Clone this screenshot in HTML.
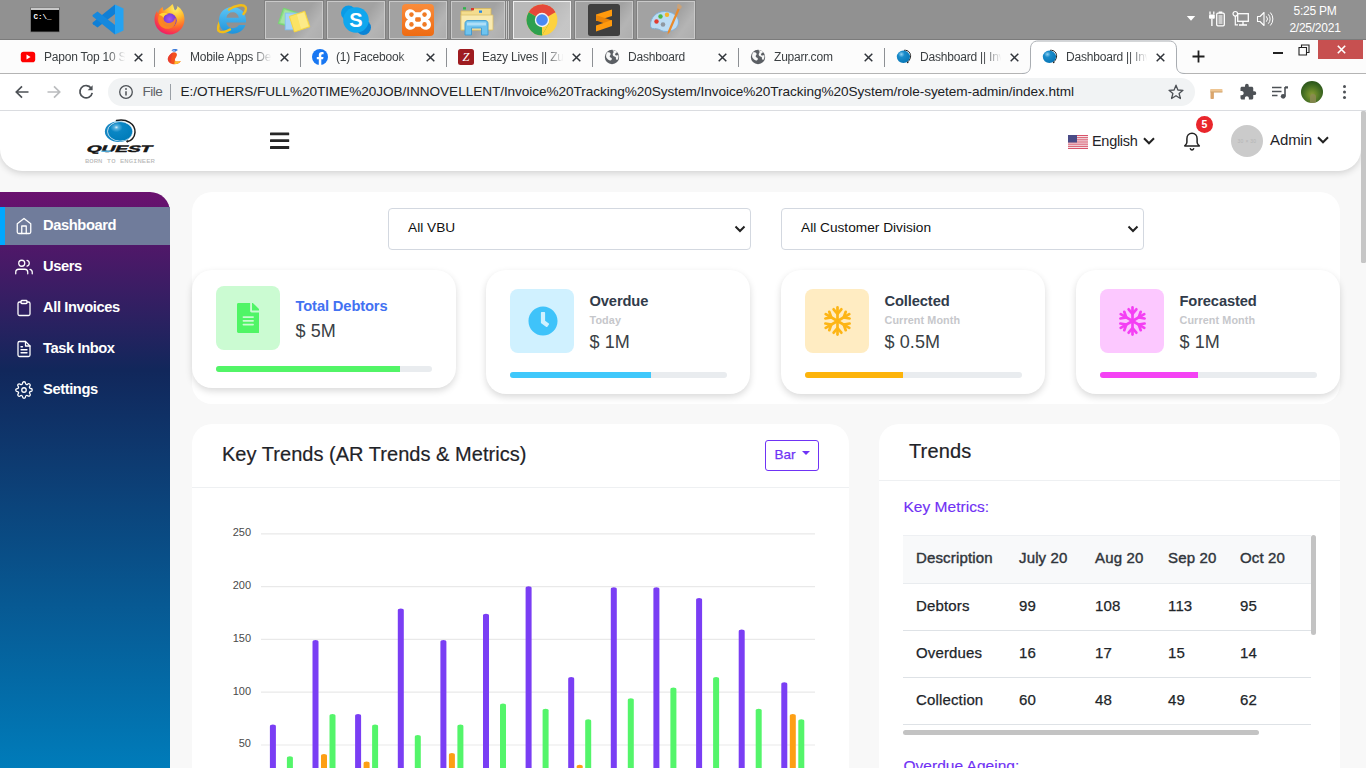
<!DOCTYPE html>
<html lang="en">
<head>
<meta charset="utf-8">
<title>Dashboard || Invoice Tracking System</title>
<style>
*{box-sizing:border-box;margin:0;padding:0}
html,body{width:1366px;height:768px;overflow:hidden;background:#f8f8f8;font-family:"Liberation Sans",Arial,sans-serif;color:#212529}
body{position:relative}
.abs{position:absolute}
/* ---------- OS taskbar ---------- */
#taskbar{position:absolute;left:0;top:0;width:1366px;height:40px;background:#919191}
.tb-btn{position:absolute;top:0;height:40px;width:60px;border:1px solid #808080;box-shadow:inset 0 0 0 1px #c9c9c9;background:linear-gradient(125deg,rgba(255,255,255,0) 58%,rgba(255,255,255,.2) 78%,rgba(255,255,255,.12) 100%),#a2a2a2}
.tb-btn.active{background:linear-gradient(125deg,rgba(255,255,255,0) 50%,rgba(255,255,255,.18) 80%),#b9b9b9;box-shadow:inset 0 0 0 1px #efefef;border-color:#8a8a8a}
.tb-ico{position:absolute;top:4px;width:32px;height:32px}
#clock{position:absolute;left:1276px;top:3px;width:78px;text-align:center;color:#fff;font-size:12px;line-height:17px;letter-spacing:-.25px}
/* ---------- Chrome ---------- */
#tabstrip{position:absolute;left:0;top:40px;width:1366px;height:34px;background:#fcfcfc;border-bottom:1px solid #b4b4b4}
.tab{position:absolute;top:0;height:33px;font-size:12px;letter-spacing:-.2px;color:#3c4043;white-space:nowrap}
.tab .ttl{position:absolute;left:44px;top:9px;width:83px;overflow:hidden;height:16px;line-height:16px;-webkit-mask-image:linear-gradient(90deg,#000 76%,transparent 98%);mask-image:linear-gradient(90deg,#000 76%,transparent 98%)}
.tab .fav{position:absolute;left:20px;top:9px;width:16px;height:16px}
.tab .x{position:absolute;left:133px;top:11.500px;width:11px;height:11px}
.tab .sep{position:absolute;left:154px;top:8px;width:1px;height:19px;background:#8d9094}
#toolbar{position:absolute;left:0;top:74px;width:1366px;height:37px;background:#fff;border-bottom:1px solid #dadce0}
#omni{position:absolute;left:108px;top:4px;width:1087px;height:28px;border-radius:14px;background:#f1f3f4}
#omni .url{position:absolute;left:72.500px;top:5px;font-size:13.600px;line-height:18px;color:#202124;white-space:nowrap;letter-spacing:-.055px}
#omni .file{position:absolute;left:34.500px;top:5px;font-size:13.600px;line-height:18px;color:#5f6368;letter-spacing:-.5px}
#omni .bar{position:absolute;left:62px;top:6px;width:1px;height:16px;background:#9aa0a6}
/* ---------- Page ---------- */
#page{position:absolute;left:0;top:111px;width:1361px;height:657px;background:#f8f8f8;overflow:hidden}
#vscroll{position:absolute;left:1361px;top:111px;width:5px;height:657px;background:#f8f8f8}
#vscroll i{position:absolute;left:0;top:0;width:5px;height:152px;background:#c6c6c6;border-radius:1.5px}
#header{position:absolute;left:0;top:0;width:1361px;height:60px;background:#fff;border-radius:0 0 22px 22px;box-shadow:0 2px 7px rgba(0,0,0,.16)}
#sidebar{position:absolute;left:0;top:81px;width:170px;height:576px;border-radius:0 20px 0 0;background:linear-gradient(180deg,#6b116f 0%,#11275b 31%,#007cba 100%)}
.nav{position:absolute;left:0;width:170px;height:38px;color:#fff;font-weight:700;font-size:14.7px;line-height:36px;padding-left:43px;letter-spacing:-.4px}
.nav svg{position:absolute;left:15px;top:10px;width:18px;height:18px;fill:none;stroke:#fff;stroke-width:1.7;stroke-linecap:round;stroke-linejoin:round}
.nav.active{background:#707c9b;border-left:5px solid #00a8ff;padding-left:38px}
.nav.active svg{left:10px}
.card{position:absolute;background:#fff;border-radius:20px}
.shadow{box-shadow:0 3px 10px rgba(0,0,0,.13)}

.sel{position:absolute;top:97px;height:42px;width:363px;border:1px solid #d3d8e0;border-radius:4px;background:#fff;font-size:13.700px;line-height:38px;padding-left:19px;color:#111}
.sel svg{position:absolute;right:3px;top:14px}
.stat{position:absolute;top:159px;width:264px;height:124px;background:#fff;border-radius:20px;box-shadow:0 3px 7px rgba(0,0,0,.15)}
.stat .ib{position:absolute;left:24px;top:19px;width:64px;height:64px;border-radius:8px}
.stat .ib svg{position:absolute}
.stat .t{position:absolute;left:103.500px;top:21px;font-size:14.7px;font-weight:700;line-height:20px;color:#313b4a;white-space:nowrap;letter-spacing:-.12px}
.stat .s{position:absolute;left:103.500px;top:43px;font-size:10.8px;font-weight:700;line-height:14px;color:#c6c7cb;white-space:nowrap;letter-spacing:.1px}
.stat .v{position:absolute;left:103.500px;top:60px;font-size:18px;line-height:24px;color:#3a3f45;white-space:nowrap;letter-spacing:.1px}
.stat .pg{position:absolute;left:24px;top:102px;width:217px;height:6px;border-radius:3px;background:#e9ecef;overflow:hidden}
.stat .pg i{display:block;height:6px}
.ctitle{position:absolute;font-size:20px;line-height:28px;color:#1f2328;white-space:nowrap}
.hline{position:absolute;left:0;height:1px;background:#eef0f2}

#tbl{position:absolute;left:24px;top:111px;width:408px;height:190px;overflow:hidden;font-size:15px;color:#212529;-webkit-text-stroke:.25px #212529}
#tbl .r{position:absolute;left:0;width:560px;height:47px;border-bottom:1px solid #dee2e6;line-height:44px;letter-spacing:.15px}
#tbl .r.h{height:49px;background:#f8f9fa;line-height:43px;border-bottom:1px solid #e9ecef;border-top:1px solid #eef0f3;-webkit-text-stroke:.4px #30353b;color:#30353b}
#tbl .r span{position:absolute;top:0;white-space:nowrap}
</style>
</head>
<body>
<!-- TASKBAR -->
<div id="taskbar">
  <i class="abs" style="left:0;top:39px;width:1366px;height:1px;background:#7b7b7b"></i>
  <div class="tb-btn" style="left:264px"></div><div class="tb-btn" style="left:326px"></div><div class="tb-btn" style="left:388px"></div>
  <div class="tb-btn" style="left:454px;width:56px"></div><div class="tb-btn" style="left:452px;width:56px"></div><div class="tb-btn" style="left:450px;width:56px"></div>
  <div class="tb-btn active" style="left:512px"></div><div class="tb-btn" style="left:574px"></div><div class="tb-btn" style="left:636px"></div>
  <!-- cmd -->
  <svg class="abs" style="left:30px;top:6px" width="30" height="27" viewBox="0 0 30 27"><rect x=".5" y="1.500" width="29" height="24.500" fill="#000" stroke="#7d7d7d" stroke-width=".8"/><rect x="1" y="1.800" width="28" height="2.200" fill="#c9c9c9"/><text x="3.500" y="13" font-family="'Liberation Mono',monospace" font-weight="700" font-size="7.500" fill="#fff">C:\_</text></svg>
  <!-- vscode -->
  <svg class="abs" style="left:91px;top:3px" width="34" height="33" viewBox="0 0 34 33"><path d="M24 1.500 L24 11 L6.500 24.500 L2 21.200 C1.300 20.600 1.300 19.800 2 19.200z" fill="#0f7fd6"/><path d="M24 31.500 L24 22 L6.500 8.500 L2 11.800 C1.300 12.400 1.300 13.200 2 13.800z" fill="#1588dd"/><path d="M24 1.500 L32.500 5.500 V27.500 L24 31.500z" fill="#25a3f2"/></svg>
  <!-- firefox -->
  <svg class="abs" style="left:153px;top:3px" width="33" height="33" viewBox="0 0 33 33"><defs><radialGradient id="ff1" cx=".7" cy=".15" r="1"><stop offset="0" stop-color="#fff36b"/><stop offset=".3" stop-color="#ffbd2e"/><stop offset=".6" stop-color="#ff6a2a"/><stop offset=".85" stop-color="#f5275d"/><stop offset="1" stop-color="#d9177c"/></radialGradient><radialGradient id="ff2" cx=".5" cy=".4" r=".6"><stop offset="0" stop-color="#a259f0"/><stop offset="1" stop-color="#6b2fc9"/></radialGradient></defs><path d="M19.500 1c1.500 2.500 1 4.500 2.500 6.500 2-1 2.500-3 2.300-4.500C29 6 31.500 11 31.500 16.500c0 8.300-6.700 15-15 15s-15-6.700-15-15c0-3.500 1-6.300 2.500-8.500.2 1.200.6 2 1.200 2.700C5.500 7.500 7.500 5 10 4c-.3 1.500 0 2.800.8 3.800C13 6 16.500 4.500 19.500 1z" fill="url(#ff1)"/><circle cx="16.500" cy="17.500" r="7.200" fill="url(#ff2)"/><path d="M6 12c2.500-2.500 6.500-2.800 9-1 -2.500.3-4 1.800-4.300 3.700 -.4 2.800 1.800 5.300 5 5.300 3.700 0 6-2.500 6.300-5.500 2 3 .5 9-4.500 10.800 -5.500 2-11.500-1.500-12.300-7.300C5 16 5.200 13.800 6 12z" fill="#ff8a1e" opacity=".92"/><path d="M6 12c2.500-2.500 6.500-2.800 9-1-2.500.3-4 1.800-4.300 3.700C9 13 7.500 12 6 12z" fill="#ffd43a"/></svg>
  <!-- IE -->
  <svg class="abs" style="left:216px;top:3px" width="32" height="32" viewBox="0 0 32 32"><defs><linearGradient id="ieg" x1="0" y1="0" x2="0" y2="1"><stop offset="0" stop-color="#5cc5f5"/><stop offset="1" stop-color="#1e93dc"/></linearGradient></defs><path d="M2.500 27.500 C.5 22 7 12 16 6" fill="none" stroke="#f2bd18" stroke-width="2.400" stroke-linecap="round"/><g transform="translate(16.500 17.500) scale(1.180) translate(-17.500 -18)"><path d="M17.500 6.500c6.500 0 11.500 4.800 11.500 11.500v1.800H12.300c.4 3 2.600 4.700 5.600 4.700 2.300 0 4-.9 5-2.600h5.600c-1.600 4.500-5.600 7.400-10.800 7.400C10.800 29.300 6 24.600 6 18 6 11.300 10.800 6.500 17.500 6.500zm0 4.600c-2.700 0-4.700 1.700-5.200 4.500h10.500c-.4-2.800-2.500-4.500-5.300-4.500z" fill="url(#ieg)"/></g><path d="M13 6.500 C19 2 27.500 1 29.500 4 C30.500 5.800 29.500 8.500 27.500 11" fill="none" stroke="#f2bd18" stroke-width="2.400" stroke-linecap="round"/><path d="M2.500 27.500 C4 30.500 10 29 14 26.500" fill="none" stroke="#f2bd18" stroke-width="2.400" stroke-linecap="round"/></svg>
  <!-- sticky notes -->
  <svg class="abs" style="left:260px;top:0" width="70" height="40" viewBox="0 0 70 40"><polygon points="23.500,8.200 37.700,12.800 32.800,27.300 18.300,23.500" fill="#8fdc8a" stroke="#6fdc6a" stroke-width=".8"/><polygon points="24.800,10 36,13.600 32,25.700 20.200,22.500" fill="#b6eab2" opacity=".6"/><rect x="25.200" y="13.100" width="16" height="16.700" fill="#a5d2f8" stroke="#7fc0f5" stroke-width=".8"/><polygon points="29.300,16.400 44.800,11.200 49.800,26.800 34.400,32" fill="#fbe365" stroke="#f6d43a" stroke-width=".9"/><polygon points="37,14.800 44,12.500 48.500,26.200 41,28.800" fill="#fdf0a6" opacity=".55"/></svg>
  <!-- skype -->
  <svg class="abs" style="left:340px;top:4px" width="32" height="32" viewBox="0 0 32 32"><circle cx="8.500" cy="9" r="7.500" fill="#0a9be6"/><circle cx="23.500" cy="23.500" r="7.500" fill="#0a84d6"/><circle cx="16" cy="16" r="12.800" fill="#10a7ee"/><text x="16" y="23.300" text-anchor="middle" font-family="'Liberation Sans',Arial,sans-serif" font-weight="700" font-size="20" fill="#fff">S</text></svg>
  <!-- xampp -->
  <svg class="abs" style="left:402px;top:4px" width="32" height="32" viewBox="0 0 32 32"><defs><linearGradient id="xa" x1="0" y1="0" x2="0" y2="1"><stop offset="0" stop-color="#f98c3c"/><stop offset="1" stop-color="#ee6b12"/></linearGradient></defs><rect x="0" y="0" width="32" height="32" rx="4" fill="url(#xa)"/><g transform="translate(16 15.500) scale(1.130 1.220) translate(-16 -15)"><path d="M9 6.500c2.500 0 3.800 1.200 4.800 2.500h4.400c1-1.300 2.300-2.500 4.800-2.500 2.700 0 4.500 1.900 4.500 4.300 0 2-1.100 3.400-2.700 4.200 1.600.8 2.700 2.200 2.700 4.200 0 2.400-1.800 4.300-4.500 4.300-2.500 0-3.800-1.200-4.800-2.500h-4.400c-1 1.300-2.300 2.500-4.800 2.500-2.700 0-4.500-1.900-4.500-4.300 0-2 1.100-3.400 2.700-4.200-1.600-.8-2.700-2.200-2.700-4.200C4.500 8.400 6.300 6.500 9 6.500z" fill="#fff"/><circle cx="10.200" cy="11" r="2" fill="#f07a24"/><circle cx="21.800" cy="11" r="2" fill="#f07a24"/><circle cx="10.200" cy="19" r="2" fill="#f07a24"/><circle cx="21.800" cy="19" r="2" fill="#f07a24"/><rect x="13.500" y="13.200" width="5" height="3.600" rx="1.200" fill="#f07a24"/></g></svg>
  <!-- explorer -->
  <svg class="abs" style="left:460px;top:6px" width="34" height="30" viewBox="0 0 34 30"><path d="M1 5 H12 L14 2.500 H31 V24 H1z" fill="#f3dc8e" stroke="#d8b95a" stroke-width=".8"/><rect x="3" y="1.200" width="3" height="2.300" fill="#2fb34a"/><rect x="11" y="2" width="3" height="2.300" fill="#d73a2f"/><rect x="19" y="4.500" width="3" height="2.300" fill="#2b8ae0"/><path d="M1 9 H33 V24 H1z" fill="#f9eab0" stroke="#dcc06a" stroke-width=".8"/><path d="M5 29 V17.500 C5 15.500 6.500 14.500 8 14.500 H25 C26.500 14.500 28 15.500 28 17.500 V29 H21.500 V22 H11.500 V29z" fill="#6fc3ee" stroke="#3e9ad0" stroke-width=".9"/><path d="M7 16.500 H26 V19.500 H7z" fill="#bfe6fa" opacity=".8"/></svg>
  <!-- chrome -->
  <svg class="abs" style="left:526px;top:4px" width="32" height="32" viewBox="0 0 32 32"><circle cx="16" cy="16" r="15.400" fill="#fdd23f"/><path d="M16 16 L2.660 8.300 A15.400 15.400 0 0 1 29.340 8.300z" fill="#e5483a"/><path d="M16 .6 A15.400 15.400 0 0 1 29.340 8.300 H16z" fill="#e5483a"/><path d="M16 16 L2.660 8.300 A15.400 15.400 0 0 0 16 31.400 L22.900 19.500z" fill="#2ea04f"/><path d="M16 31.400 L22.900 19.500 L16 16z" fill="#fdd23f"/><circle cx="16" cy="16" r="7.200" fill="#f4f4f4"/><circle cx="16" cy="16" r="5.800" fill="#4a8af4"/></svg>
  <!-- sublime -->
  <svg class="abs" style="left:588px;top:4px" width="32" height="32" viewBox="0 0 32 32"><rect width="32" height="32" rx="2.500" fill="#3f3f3f"/><path d="M8 10.500 L24 5.500 V12 L8 17z" fill="#ff9a0d"/><path d="M8 11 L24 16.500 V22 L8 16.500z" fill="#e8840a"/><path d="M24 16 L8 21.500 V27.500 L24 22z" fill="#ff9a0d"/></svg>
  <!-- paint -->
  <svg class="abs" style="left:649px;top:3px" width="34" height="34" viewBox="0 0 34 34"><path d="M15.500 8.500c8 0 14 4.500 14 10.500 0 5.500-5 9.500-12.500 9.500-4.500 0-5.500-2-8-2.500-3-.6-7.500 1-7.500-4C1.500 14.500 7.500 8.500 15.500 8.500z" fill="#bcdcf4" stroke="#7fb0d8" stroke-width=".9"/><circle cx="14" cy="21.500" r="2.300" fill="#8f98a2"/><circle cx="7.500" cy="18.500" r="2.200" fill="#e03c31"/><circle cx="11.500" cy="13.500" r="2.200" fill="#4db848"/><circle cx="18" cy="11.800" r="2.200" fill="#f5b52a"/><path d="M29.500 3.500 L31.500 4.500 L21 29 L18.500 31.500 L19 28z" fill="#e98a2b"/><path d="M28.500 1 C30 .5 32.500 2 33 4 L31 6.500 L28 5z" fill="#c9a27a"/></svg>
  <!-- tray -->
  <svg class="abs" style="left:1186px;top:15px" width="10" height="7" viewBox="0 0 10 7"><path d="M.8 1 H9.200 L5 5.800z" fill="#fff"/></svg>
  <svg class="abs" style="left:1208px;top:10px" width="18" height="18" viewBox="0 0 18 18"><rect x="8.700" y="3.200" width="7.600" height="12.600" rx="1.200" fill="none" stroke="#fff" stroke-width="1.300"/><rect x="10.700" y="1.500" width="3.600" height="1.600" fill="#fff"/><rect x="10.500" y="5" width="4" height="9" fill="#fff" opacity=".55"/><path d="M2 1.500 V4.500 M5.800 1.500 V4.500" stroke="#fff" stroke-width="1.300"/><rect x="1" y="4.500" width="5.800" height="4.300" rx="1" fill="#fff"/><path d="M3.900 8.800 V16" stroke="#fff" stroke-width="1.400"/></svg>
  <svg class="abs" style="left:1232px;top:10px" width="18" height="18" viewBox="0 0 18 18"><rect x="5.700" y="3.700" width="10.600" height="7.600" fill="none" stroke="#fff" stroke-width="1.300"/><path d="M11 11.500 V14.500 M7 15 H15" stroke="#fff" stroke-width="1.300"/><circle cx="3.300" cy="3.800" r="2.300" fill="none" stroke="#fff" stroke-width="1.200"/><path d="M3.300 6 V14.800 H6" fill="none" stroke="#fff" stroke-width="1.200"/></svg>
  <svg class="abs" style="left:1256px;top:10px" width="18" height="18" viewBox="0 0 18 18"><path d="M1.500 6.500 H4 L8 2.500 V15.500 L4 11.500 H1.500z" fill="none" stroke="#fff" stroke-width="1.100" stroke-linejoin="round"/><path d="M10.300 6.300 a4 4 0 0 1 0 5.400 M12.300 4.300 a7 7 0 0 1 0 9.400 M14.300 2.500 a9.500 9.500 0 0 1 0 13" fill="none" stroke="#fff" stroke-width="1"/></svg>

  <div id="clock">5:25 PM<br>2/25/2021</div>
</div>
<!-- CHROME TABS -->
<div id="tabstrip">
  <svg class="abs" style="left:1022px;top:0" width="164" height="34" viewBox="0 0 164 34"><path d="M0 33.500 C6 33.500 8.500 31 8.500 25 V9 C8.500 4 11 1 16 1 H147 C152 1 154.500 4 154.500 9 V25 C154.500 31 157 33.500 163 33.500 V35 H0z" fill="#fff" stroke="#a9adb2" stroke-width="1"/></svg>
  <div class="tab" style="left:0px"><svg class="fav" viewBox="0 0 16 16"><rect x="0.800" y="2.800" width="14.400" height="10.400" rx="2.800" fill="#ff0000"/><path d="M6.500 5.600 L10.600 8 L6.500 10.400z" fill="#fff"/></svg><span class="ttl">Papon Top 10 Songs</span><svg class="x" viewBox="0 0 11 11"><path d="M1.700 1.700 L9.300 9.300 M9.300 1.700 L1.700 9.300" stroke="#30343a" stroke-width="1.500" fill="none"/></svg><i class="sep"></i></div>
  <div class="tab" style="left:146px"><svg class="fav" viewBox="0 0 16 16"><g transform="translate(-2.300 -2) scale(1.220)"><path d="M7.500 4.500c2-.6 3.600.5 3.300 2.300-.3 1.700-1.800 2.600-1.600 4 .2 1.200 1.900 1.500 4.800.6-1.200 2.300-4.600 3.400-7.600 2.300C3.600 12.700 2.600 10 4 7.800c.8-1.300 2-2.700 3.500-3.300z" fill="#f4511e"/><path d="M9.200 10.800c.2 1.200 1.900 1.500 4.800.6-1 1.800-3.200 2.700-5.300 2.600z" fill="#fbc02d"/><path d="M4 7.800c.8-1.300 2-2.700 3.500-3.300-.6 2.800-2 5.500-1.100 9.200C3.600 12.700 2.600 10 4 7.800z" fill="#e53935" opacity=".75"/><path d="M6.300 2.600 L9.200 1 L11.700 2.400 L9 4z" fill="#3d7bd9"/><circle cx="8.300" cy="3.300" r="1" fill="#8fb5ef"/></g></svg><span class="ttl">Mobile Apps Development</span><svg class="x" viewBox="0 0 11 11"><path d="M1.700 1.700 L9.300 9.300 M9.300 1.700 L1.700 9.300" stroke="#30343a" stroke-width="1.500" fill="none"/></svg><i class="sep"></i></div>
  <div class="tab" style="left:292px"><svg class="fav" viewBox="0 0 16 16"><circle cx="8" cy="8" r="8" fill="#1877f2"/><path d="M11.100 10.300l.4-2.300H9.300V6.500c0-.6.300-1.200 1.300-1.200h1V3.300s-.9-.2-1.800-.2c-1.800 0-3 1.100-3 3.100V8H4.800v2.300h2V16c.4.100.8.100 1.200.100s.8 0 1.300-.1v-5.700z" fill="#fff"/></svg><span class="ttl">(1) Facebook</span><svg class="x" viewBox="0 0 11 11"><path d="M1.700 1.700 L9.300 9.300 M9.300 1.700 L1.700 9.300" stroke="#30343a" stroke-width="1.500" fill="none"/></svg><i class="sep"></i></div>
  <div class="tab" style="left:438px"><svg class="fav" viewBox="0 0 16 16"><rect width="16" height="16" rx="2.500" fill="#9e1c20"/><text x="8" y="12.300" text-anchor="middle" font-family="'Liberation Serif',serif" font-style="italic" font-size="12.500" fill="#fff">Z</text></svg><span class="ttl">Eazy Lives || Zuparr</span><svg class="x" viewBox="0 0 11 11"><path d="M1.700 1.700 L9.300 9.300 M9.300 1.700 L1.700 9.300" stroke="#30343a" stroke-width="1.500" fill="none"/></svg><i class="sep"></i></div>
  <div class="tab" style="left:584px"><svg class="fav" viewBox="0 0 16 16"><circle cx="8" cy="8" r="7.200" fill="#5b5f64"/><path d="M3.200 3.300c1.600-.2 3 .3 3.400 1.400.4 1.200-1 1.600-.9 2.700.1 1 1.500 1 2 1.900.5 1-.4 2.400-1.700 2.200C4.300 11.200 3 9.500 2.200 8.200 1.900 6.400 2.300 4.500 3.200 3.300z M8.500 1.400c1.700-.3 3.600.5 4.500 1.600-.3.900-1.300 1-1.800 1.800-.4.800 0 1.600 1 1.700.9.100 1.600-.4 2.200-.1.300 1.600-.3 3.500-1.200 4.600-1-.2-1.400-1.100-1.300-2 .100-.8-.600-1.200-1.400-1.400-1-.3-1.800-1-1.800-2.100 0-1.300 1-1.700.9-2.700-.1-.6-.6-1-1.100-1.400z" fill="#fff" opacity=".95"/></svg><span class="ttl">Dashboard</span><svg class="x" viewBox="0 0 11 11"><path d="M1.700 1.700 L9.300 9.300 M9.300 1.700 L1.700 9.300" stroke="#30343a" stroke-width="1.500" fill="none"/></svg><i class="sep"></i></div>
  <div class="tab" style="left:730px"><svg class="fav" viewBox="0 0 16 16"><circle cx="8" cy="8" r="7.200" fill="#5b5f64"/><path d="M3.200 3.300c1.600-.2 3 .3 3.400 1.400.4 1.200-1 1.600-.9 2.700.1 1 1.500 1 2 1.900.5 1-.4 2.400-1.700 2.200C4.300 11.200 3 9.500 2.200 8.200 1.900 6.400 2.300 4.500 3.200 3.300z M8.500 1.400c1.700-.3 3.600.5 4.500 1.600-.3.900-1.300 1-1.800 1.800-.4.800 0 1.600 1 1.700.9.100 1.600-.4 2.200-.1.300 1.600-.3 3.500-1.200 4.600-1-.2-1.400-1.100-1.300-2 .100-.8-.600-1.200-1.400-1.400-1-.3-1.800-1-1.800-2.100 0-1.300 1-1.700.9-2.700-.1-.6-.6-1-1.100-1.400z" fill="#fff" opacity=".95"/></svg><span class="ttl">Zuparr.com</span><svg class="x" viewBox="0 0 11 11"><path d="M1.700 1.700 L9.300 9.300 M9.300 1.700 L1.700 9.300" stroke="#30343a" stroke-width="1.500" fill="none"/></svg><i class="sep"></i></div>
  <div class="tab" style="left:876px"><svg class="fav" viewBox="0 0 16 16"><defs><radialGradient id="qf" cx=".35" cy=".3" r=".8"><stop offset="0" stop-color="#8fd0f2"/><stop offset=".3" stop-color="#1a8ccb"/><stop offset="1" stop-color="#0573b3"/></radialGradient></defs><path d="M8 1.300c4.500-.5 7.200 3 6.500 6.800-.5 2.600-2 4.300-3 5" fill="none" stroke="#222" stroke-width="1"/><ellipse cx="7.400" cy="7.800" rx="6.600" ry="6.200" fill="url(#qf)"/><circle cx="11.700" cy="13.400" r=".8" fill="#222"/></svg><span class="ttl">Dashboard || Invoice Tracking System</span><svg class="x" viewBox="0 0 11 11"><path d="M1.700 1.700 L9.300 9.300 M9.300 1.700 L1.700 9.300" stroke="#30343a" stroke-width="1.500" fill="none"/></svg></div>
  <div class="tab act" style="left:1022px"><svg class="fav" viewBox="0 0 16 16"><defs><radialGradient id="qf2" cx=".35" cy=".3" r=".8"><stop offset="0" stop-color="#8fd0f2"/><stop offset=".3" stop-color="#1a8ccb"/><stop offset="1" stop-color="#0573b3"/></radialGradient></defs><path d="M8 1.300c4.500-.5 7.200 3 6.500 6.800-.5 2.600-2 4.300-3 5" fill="none" stroke="#222" stroke-width="1"/><ellipse cx="7.400" cy="7.800" rx="6.600" ry="6.200" fill="url(#qf2)"/><circle cx="11.700" cy="13.400" r=".8" fill="#222"/></svg><span class="ttl">Dashboard || Invoice Tracking System</span><svg class="x" viewBox="0 0 11 11"><path d="M1.700 1.700 L9.300 9.300 M9.300 1.700 L1.700 9.300" stroke="#30343a" stroke-width="1.500" fill="none"/></svg></div>
  <svg class="abs" style="left:1191px;top:9px" width="15" height="15" viewBox="0 0 15 15"><path d="M7.500 1.500 V13.500 M1.500 7.500 H13.500" stroke="#1f1f1f" stroke-width="1.800" fill="none"/></svg>
  <div class="abs" style="left:1273px;top:12px;width:10px;height:1.500px;background:#222"></div>
  <svg class="abs" style="left:1298px;top:4px" width="12" height="12" viewBox="0 0 12 12"><path d="M1 3.500 H8.500 V11 H1z M3.500 3.500 V1 H11 V8.500 H8.500" fill="none" stroke="#222" stroke-width="1.100"/></svg>
  <div class="abs" style="left:1318px;top:0;width:45px;height:18.600px;background:#c75050"></div>
  <svg class="abs" style="left:1336px;top:4px" width="11" height="11" viewBox="0 0 11 11"><path d="M1.800 1.800 L9.200 9.200 M9.200 1.800 L1.800 9.200" stroke="#fff" stroke-width="1.600" fill="none"/></svg>
</div>
<!-- CHROME TOOLBAR -->
<div id="toolbar">
  <svg class="abs" style="left:14px;top:10px" width="16" height="16" viewBox="0 0 16 16"><path d="M14.500 8 H2.500 M8 2.300 L2.300 8 L8 13.700" fill="none" stroke="#4d5156" stroke-width="1.700"/></svg>
  <svg class="abs" style="left:46px;top:10px" width="16" height="16" viewBox="0 0 16 16"><path d="M1.500 8 H13.500 M8 2.300 L13.700 8 L8 13.700" fill="none" stroke="#babcbe" stroke-width="1.700"/></svg>
  <svg class="abs" style="left:77px;top:9px" width="18" height="18" viewBox="0 0 18 18"><path d="M14.200 5.200 A6.200 6.200 0 1 0 15.200 9.800" fill="none" stroke="#4d5156" stroke-width="1.700"/><path d="M15.600 2.300 V7.300 H10.600z" fill="#4d5156"/></svg>
  <div id="omni">
    <svg class="abs" style="left:10px;top:6px" width="16" height="16" viewBox="0 0 16 16"><circle cx="8" cy="8" r="6.300" fill="none" stroke="#4d5156" stroke-width="1.300"/><path d="M8 7.200 V11.400" stroke="#4d5156" stroke-width="1.500"/><circle cx="8" cy="5" r=".9" fill="#4d5156"/></svg>
    <span class="file">File</span><i class="bar"></i><span class="url">E:/OTHERS/FULL%20TIME%20JOB/INNOVELLENT/Invoice%20Tracking%20System/Invoice%20Tracking%20System/role-syetem-admin/index.html</span>
    <svg class="abs" style="left:1059px;top:5px" width="18" height="18" viewBox="0 0 18 18"><path d="M9 2.200 L10.900 7 L16 7.300 L12.100 10.500 L13.400 15.500 L9 12.700 L4.600 15.500 L5.900 10.500 L2 7.300 L7.100 7z" fill="none" stroke="#4d5156" stroke-width="1.300" stroke-linejoin="round"/></svg>
  </div>
  <svg class="abs" style="left:1207px;top:10px" width="20" height="18" viewBox="0 0 20 18"><rect x="3.500" y="5" width="3.400" height="10" rx=".8" fill="#dba56c"/><rect x="3.500" y="5" width="12" height="3.300" rx=".8" fill="#eec592"/><rect x="3.500" y="7.600" width="12" height=".8" fill="#c99860"/></svg>
  <svg class="abs" style="left:1239px;top:9px" width="18" height="18" viewBox="0 0 24 24"><path d="M20.500 11H19V7c0-1.100-.9-2-2-2h-4V3.500a2.500 2.500 0 0 0-5 0V5H4c-1.100 0-2 .9-2 2v3.800h1.500c1.500 0 2.700 1.200 2.700 2.700S5 16.200 3.500 16.200H2V20c0 1.100.9 2 2 2h3.800v-1.500c0-1.500 1.200-2.700 2.700-2.700s2.700 1.200 2.700 2.700V22H17c1.100 0 2-.9 2-2v-4h1.500a2.500 2.500 0 0 0 0-5z" fill="#4d5156"/></svg>
  <svg class="abs" style="left:1270px;top:9px" width="19" height="18" viewBox="0 0 19 18"><path d="M2 4.500 H11.500 M2 8.500 H11.500 M2 12.500 H7.500" stroke="#4d5156" stroke-width="1.700" fill="none"/><path d="M15 4 V13.200" stroke="#4d5156" stroke-width="1.600"/><path d="M15 3.300 H18 V5.500 H15z" fill="#4d5156"/><circle cx="13.200" cy="13.300" r="2.400" fill="#4d5156"/></svg>
  <div class="abs" style="left:1301px;top:7px;width:22px;height:22px;border-radius:50%;background:radial-gradient(circle at 50% 62%,#8a9a3a 0,#6b8a2a 22%,#4b7324 45%,#2f5a1c 70%,#274a18 100%);overflow:hidden"><i class="abs" style="left:9px;top:13px;width:6px;height:12px;background:#8d8a55;border-radius:3px 3px 0 0;opacity:.8"></i></div>
  <div class="abs" style="left:1343px;top:11px;width:3.400px;height:3.400px;border-radius:50%;background:#4d5156;box-shadow:0 5.500px 0 #4d5156,0 11px 0 #4d5156"></div>
</div>
<!-- PAGE -->
<div id="page">
  <div id="header">
    <svg class="abs" style="left:80px;top:6px" width="82" height="52" viewBox="0 0 82 52">
      <defs><radialGradient id="gl" cx="0.33" cy="0.28" r="0.75"><stop offset="0" stop-color="#dff1fb"/><stop offset="0.12" stop-color="#58b1de"/><stop offset="0.35" stop-color="#0a86c4"/><stop offset="1" stop-color="#007cba"/></radialGradient></defs>
      <path d="M36.5 3.6 C46 1.5 55.5 6.5 55 15.5 C54.7 20.5 51 24 47.5 24.6" fill="none" stroke="#1c1c1c" stroke-width="1.5" stroke-linecap="round"/>
      <ellipse cx="38.7" cy="14.6" rx="13.8" ry="10.3" fill="#1586c2"/>
      <ellipse cx="39.9" cy="14.3" rx="12.4" ry="9.6" fill="none" stroke="#fff" stroke-width="0.8" opacity=".9"/>
      <ellipse cx="40.4" cy="14.4" rx="11.8" ry="9.2" fill="url(#gl)"/>
      <circle cx="47.3" cy="24.3" r="1.1" fill="#1c1c1c"/>
            <text x="0" y="0" transform="translate(5.8 34.6) skewX(-24) scale(1.62 1)" font-family="'Liberation Sans',Arial,sans-serif" font-weight="700" font-size="9.4" fill="#161616" stroke="#161616" stroke-width=".45" textLength="40.2" lengthAdjust="spacingAndGlyphs">QUEST</text>
      <rect x="21.3" y="33.6" width="9.6" height="1.3" fill="#53b4e6"/>
      <text x="5" y="45.8" font-family="'Liberation Mono','Liberation Sans',monospace" font-size="6.2" fill="#b4b4b4" textLength="70" lengthAdjust="spacingAndGlyphs">BORN TO ENGINEER</text>
    </svg>
    <svg class="abs" style="left:268px;top:18px" width="24" height="24" viewBox="0 0 24 24"><g fill="#262626"><rect x="2" y="3.400" width="19.200" height="2.900" rx=".5"/><rect x="2" y="10.200" width="19.200" height="2.900" rx=".5"/><rect x="2" y="17" width="19.200" height="2.900" rx=".5"/></g></svg>
    <!-- language -->
    <svg class="abs" style="left:1068px;top:24px" width="20" height="14" viewBox="0 0 20 14">
      <rect width="20" height="14" fill="#f6f1f2"/>
      <g fill="#d9536a"><rect y="0" width="20" height="1.08"/><rect y="2.15" width="20" height="1.08"/><rect y="4.3" width="20" height="1.08"/><rect y="6.46" width="20" height="1.08"/><rect y="8.6" width="20" height="1.08"/><rect y="10.77" width="20" height="1.08"/><rect y="12.92" width="20" height="1.08"/></g>
      <rect width="9" height="7.5" fill="#4a4b86"/>
    </svg>
    <div class="abs" style="left:1092px;top:20px;font-size:14.5px;line-height:20px;color:#1f2328;letter-spacing:-.3px">English</div>
    <svg class="abs" style="left:1142px;top:24px" width="14" height="12" viewBox="0 0 14 12"><path d="M2 3.2 L7 8.3 L12 3.2" fill="none" stroke="#222" stroke-width="2"/></svg>
    <!-- bell -->
    <svg class="abs" style="left:1182px;top:20px" width="20" height="22" viewBox="0 0 20 22"><path d="M10 2.3c-3 0-5.1 2.3-5.1 5.4v3.6c0 1.5-.9 2.6-2.2 3.6h14.6c-1.3-1-2.2-2.100-2.200-3.600V7.700C15.100 4.600 13 2.300 10 2.300z" fill="none" stroke="#222" stroke-width="1.5" stroke-linejoin="round"/><path d="M8.400 17.700c.3.800.9 1.200 1.600 1.200s1.300-.4 1.600-1.200" fill="none" stroke="#222" stroke-width="1.5" stroke-linecap="round"/></svg>
    <div class="abs" style="left:1196px;top:5px;width:17px;height:17px;border-radius:50%;background:#e9262c;color:#fff;font-size:10.5px;font-weight:700;line-height:17px;text-align:center">5</div>
    <!-- avatar -->
    <div class="abs" style="left:1231px;top:14px;width:32px;height:32px;border-radius:50%;background:#cbcbcb;color:#b5b5b5;font-size:5px;line-height:33px;text-align:center;letter-spacing:.3px">30 × 30</div>
    <div class="abs" style="left:1270px;top:19px;font-size:15px;line-height:20px;color:#1f2328;letter-spacing:-.1px">Admin</div>
    <svg class="abs" style="left:1316px;top:23px" width="14" height="12" viewBox="0 0 14 12"><path d="M2 3.2 L7 8.3 L12 3.2" fill="none" stroke="#222" stroke-width="2"/></svg>
  </div>
  <div id="sidebar">
    <div class="nav active" style="top:15px"><svg viewBox="0 0 24 24"><path d="M3 9l9-7 9 7v11a2 2 0 0 1-2 2H5a2 2 0 0 1-2-2z"/><polyline points="9 22 9 12 15 12 15 22"/></svg>Dashboard</div>
    <div class="nav" style="top:56px"><svg viewBox="0 0 24 24"><path d="M17 21v-2a4 4 0 0 0-4-4H5a4 4 0 0 0-4 4v2"/><circle cx="9" cy="7" r="4"/><path d="M23 21v-2a4 4 0 0 0-3-3.870"/><path d="M16 3.130a4 4 0 0 1 0 7.750"/></svg>Users</div>
    <div class="nav" style="top:97px"><svg viewBox="0 0 24 24"><path d="M16 4h2a2 2 0 0 1 2 2v14a2 2 0 0 1-2 2H6a2 2 0 0 1-2-2V6a2 2 0 0 1 2-2h2"/><rect x="8" y="2" width="8" height="4" rx="1" ry="1"/></svg>All Invoices</div>
    <div class="nav" style="top:138px"><svg viewBox="0 0 24 24"><path d="M14 2H6a2 2 0 0 0-2 2v16a2 2 0 0 0 2 2h12a2 2 0 0 0 2-2V8z"/><polyline points="14 2 14 8 20 8"/><line x1="16" y1="13" x2="8" y2="13"/><line x1="16" y1="17" x2="8" y2="17"/><polyline points="10 9 9 9 8 9"/></svg>Task Inbox</div>
    <div class="nav" style="top:179px"><svg viewBox="0 0 24 24"><circle cx="12" cy="12" r="3"/><path d="M19.400 15a1.650 1.650 0 0 0 .330 1.820l.060.060a2 2 0 0 1 0 2.830 2 2 0 0 1-2.830 0l-.060-.060a1.650 1.650 0 0 0-1.820-.330 1.650 1.650 0 0 0-1 1.510V21a2 2 0 0 1-2 2 2 2 0 0 1-2-2v-.090A1.650 1.650 0 0 0 9 19.400a1.650 1.650 0 0 0-1.820.330l-.060.060a2 2 0 0 1-2.830 0 2 2 0 0 1 0-2.830l.060-.060a1.650 1.650 0 0 0 .330-1.820 1.650 1.650 0 0 0-1.510-1H3a2 2 0 0 1-2-2 2 2 0 0 1 2-2h.090A1.650 1.650 0 0 0 4.600 9a1.650 1.650 0 0 0-.330-1.820l-.060-.060a2 2 0 0 1 0-2.830 2 2 0 0 1 2.830 0l.060.060a1.650 1.650 0 0 0 1.820.330H9a1.650 1.650 0 0 0 1-1.510V3a2 2 0 0 1 2-2 2 2 0 0 1 2 2v.090a1.650 1.650 0 0 0 1 1.510 1.650 1.650 0 0 0 1.820-.330l.060-.060a2 2 0 0 1 2.830 0 2 2 0 0 1 0 2.830l-.060.060a1.650 1.650 0 0 0-.330 1.820V9a1.650 1.650 0 0 0 1.510 1H21a2 2 0 0 1 2 2 2 2 0 0 1-2 2h-.090a1.650 1.650 0 0 0-1.510 1z"/></svg>Settings</div>
  </div>
  <div class="card" id="topbox" style="left:192px;top:81px;width:1148px;height:212px"></div>
  <div class="sel" style="left:388px">All VBU<svg width="14" height="12" viewBox="0 0 14 12"><path d="M2.500 3.500 L7 8 L11.500 3.500" fill="none" stroke="#222" stroke-width="2"/></svg></div>
  <div class="sel" style="left:781px">All Customer Division<svg width="14" height="12" viewBox="0 0 14 12"><path d="M2.500 3.500 L7 8 L11.500 3.500" fill="none" stroke="#222" stroke-width="2"/></svg></div>
  <div class="stat" style="left:192px;height:118px">
    <div class="ib" style="background:#cbfbd2;top:16px"><svg width="22.500" height="30" viewBox="0 0 384 512" style="left:20.500px;top:17px"><path fill="#50f566" d="M224 136V0H24C10.700 0 0 10.700 0 24v464c0 13.300 10.700 24 24 24h336c13.300 0 24-10.700 24-24V160H248c-13.200 0-24-10.800-24-24zm64 236c0 6.600-5.400 12-12 12H108c-6.600 0-12-5.400-12-12v-8c0-6.600 5.400-12 12-12h168c6.600 0 12 5.400 12 12v8zm0-64c0 6.600-5.400 12-12 12H108c-6.600 0-12-5.400-12-12v-8c0-6.600 5.400-12 12-12h168c6.600 0 12 5.400 12 12v8zm0-72v8c0 6.600-5.400 12-12 12H108c-6.600 0-12-5.400-12-12v-8c0-6.600 5.400-12 12-12h168c6.600 0 12 5.400 12 12zm96-114.100v6.100H256V0h6.100c6.400 0 12.500 2.500 17 7l97.900 98c4.500 4.500 7 10.600 7 16.900z"/></svg></div>
    <div class="t" style="color:#4271f2;top:26px">Total Debtors</div>
    <div class="v" style="top:49px">$ 5M</div>
    <div class="pg" style="top:96px;width:216px"><i style="width:85%;background:#52f567"></i></div>
  </div>
  <div class="stat" style="left:486px">
    <div class="ib" style="background:#d0f1ff"><svg width="30" height="30" viewBox="0 0 512 512" style="left:17.500px;top:16.800px"><path fill="#3fc3fa" d="M256 8C119 8 8 119 8 256s111 248 248 248 248-111 248-248S393 8 256 8zm57.100 350.100L224.900 294c-3.100-2.300-4.900-5.900-4.900-9.700V116c0-6.600 5.400-12 12-12h48c6.600 0 12 5.400 12 12v137.700l63.500 46.200c5.400 3.900 6.500 11.400 2.600 16.800l-28.200 38.800c-3.900 5.300-11.400 6.500-16.800 2.600z"/></svg></div>
    <div class="t">Overdue</div><div class="s">Today</div><div class="v">$ 1M</div>
    <div class="pg"><i style="width:65%;background:#3fc8fb"></i></div>
  </div>
  <div class="stat" style="left:781px">
    <div class="ib" style="background:#ffecc2"><svg width="27" height="30" viewBox="0 0 448 512" style="left:18.500px;top:17px"><g transform="translate(224 256)" fill="none" stroke="#fdb515" stroke-width="46" stroke-linecap="round" stroke-linejoin="round"><g transform="rotate(0)"><line x1="0" y1="0" x2="0" y2="-232"/><polyline points="-66,-200 0,-122 66,-200"/></g><g transform="rotate(60)"><line x1="0" y1="0" x2="0" y2="-232"/><polyline points="-66,-200 0,-122 66,-200"/></g><g transform="rotate(120)"><line x1="0" y1="0" x2="0" y2="-232"/><polyline points="-66,-200 0,-122 66,-200"/></g><g transform="rotate(180)"><line x1="0" y1="0" x2="0" y2="-232"/><polyline points="-66,-200 0,-122 66,-200"/></g><g transform="rotate(240)"><line x1="0" y1="0" x2="0" y2="-232"/><polyline points="-66,-200 0,-122 66,-200"/></g><g transform="rotate(300)"><line x1="0" y1="0" x2="0" y2="-232"/><polyline points="-66,-200 0,-122 66,-200"/></g></g></svg></div>
    <div class="t">Collected</div><div class="s">Current Month</div><div class="v">$ 0.5M</div>
    <div class="pg"><i style="width:45%;background:#fdb40b"></i></div>
  </div>
  <div class="stat" style="left:1076px">
    <div class="ib" style="background:#fcc8ff"><svg width="27" height="30" viewBox="0 0 448 512" style="left:18.500px;top:17px"><g transform="translate(224 256)" fill="none" stroke="#f43ff4" stroke-width="46" stroke-linecap="round" stroke-linejoin="round"><g transform="rotate(0)"><line x1="0" y1="0" x2="0" y2="-232"/><polyline points="-66,-200 0,-122 66,-200"/></g><g transform="rotate(60)"><line x1="0" y1="0" x2="0" y2="-232"/><polyline points="-66,-200 0,-122 66,-200"/></g><g transform="rotate(120)"><line x1="0" y1="0" x2="0" y2="-232"/><polyline points="-66,-200 0,-122 66,-200"/></g><g transform="rotate(180)"><line x1="0" y1="0" x2="0" y2="-232"/><polyline points="-66,-200 0,-122 66,-200"/></g><g transform="rotate(240)"><line x1="0" y1="0" x2="0" y2="-232"/><polyline points="-66,-200 0,-122 66,-200"/></g><g transform="rotate(300)"><line x1="0" y1="0" x2="0" y2="-232"/><polyline points="-66,-200 0,-122 66,-200"/></g></g></svg></div>
    <div class="t">Forecasted</div><div class="s">Current Month</div><div class="v">$ 1M</div>
    <div class="pg"><i style="width:45%;background:#f442f4"></i></div>
  </div>
  <div class="card" id="chartcard" style="left:192px;top:313px;width:657px;height:400px">
    <svg class="abs" style="left:0;top:0" width="657" height="400" viewBox="0 0 657 400" font-family="'Liberation Sans',Arial,sans-serif">
    <line x1="69" x2="623" y1="109.8" y2="109.8" stroke="#e9e9e9" stroke-width="1.2"/>
    <text x="59" y="112.2" text-anchor="end" font-size="11" fill="#4a4a4a">250</text>
    <line x1="69" x2="623" y1="162.6" y2="162.6" stroke="#e9e9e9" stroke-width="1.2"/>
    <text x="59" y="165.0" text-anchor="end" font-size="11" fill="#4a4a4a">200</text>
    <line x1="69" x2="623" y1="215.4" y2="215.4" stroke="#e9e9e9" stroke-width="1.2"/>
    <text x="59" y="217.8" text-anchor="end" font-size="11" fill="#4a4a4a">150</text>
    <line x1="69" x2="623" y1="268.2" y2="268.2" stroke="#e9e9e9" stroke-width="1.2"/>
    <text x="59" y="270.6" text-anchor="end" font-size="11" fill="#4a4a4a">100</text>
    <line x1="69" x2="623" y1="321.0" y2="321.0" stroke="#e9e9e9" stroke-width="1.2"/>
    <text x="59" y="323.4" text-anchor="end" font-size="11" fill="#4a4a4a">50</text>
    <line x1="69" x2="623" y1="373.8" y2="373.8" stroke="#e9e9e9" stroke-width="1.2"/>
    <text x="59" y="376.2" text-anchor="end" font-size="11" fill="#4a4a4a">0</text>
    <path d="M77.9 373.9 v-71.4 a3 1.9 0 0 1 3 -1.9 a3 1.9 0 0 1 3 1.9 v71.4 z" fill="#7a3ef4"/>
    <path d="M86.4 373.9 v-16.5 a3 1.9 0 0 1 3 -1.9 a3 1.9 0 0 1 3 1.9 v16.5 z" fill="#fd9f14"/>
    <path d="M94.9 373.9 v-39.7 a3 1.9 0 0 1 3 -1.9 a3 1.9 0 0 1 3 1.9 v39.7 z" fill="#54f56a"/>
    <path d="M120.5 373.9 v-155.9 a3 1.9 0 0 1 3 -1.9 a3 1.9 0 0 1 3 1.9 v155.9 z" fill="#7a3ef4"/>
    <path d="M129.0 373.9 v-41.9 a3 1.9 0 0 1 3 -1.9 a3 1.9 0 0 1 3 1.9 v41.9 z" fill="#fd9f14"/>
    <path d="M137.5 373.9 v-82.0 a3 1.9 0 0 1 3 -1.9 a3 1.9 0 0 1 3 1.9 v82.0 z" fill="#54f56a"/>
    <path d="M163.1 373.9 v-82.0 a3 1.9 0 0 1 3 -1.9 a3 1.9 0 0 1 3 1.9 v82.0 z" fill="#7a3ef4"/>
    <path d="M171.6 373.9 v-34.5 a3 1.9 0 0 1 3 -1.9 a3 1.9 0 0 1 3 1.9 v34.5 z" fill="#fd9f14"/>
    <path d="M180.1 373.9 v-71.4 a3 1.9 0 0 1 3 -1.9 a3 1.9 0 0 1 3 1.9 v71.4 z" fill="#54f56a"/>
    <path d="M205.8 373.9 v-187.6 a3 1.9 0 0 1 3 -1.9 a3 1.9 0 0 1 3 1.9 v187.6 z" fill="#7a3ef4"/>
    <path d="M214.3 373.9 v-20.7 a3 1.9 0 0 1 3 -1.9 a3 1.9 0 0 1 3 1.9 v20.7 z" fill="#fd9f14"/>
    <path d="M222.8 373.9 v-60.9 a3 1.9 0 0 1 3 -1.9 a3 1.9 0 0 1 3 1.9 v60.9 z" fill="#54f56a"/>
    <path d="M248.4 373.9 v-155.9 a3 1.9 0 0 1 3 -1.9 a3 1.9 0 0 1 3 1.9 v155.9 z" fill="#7a3ef4"/>
    <path d="M256.9 373.9 v-42.9 a3 1.9 0 0 1 3 -1.9 a3 1.9 0 0 1 3 1.9 v42.9 z" fill="#fd9f14"/>
    <path d="M265.4 373.9 v-71.4 a3 1.9 0 0 1 3 -1.9 a3 1.9 0 0 1 3 1.9 v71.4 z" fill="#54f56a"/>
    <path d="M291.0 373.9 v-182.3 a3 1.9 0 0 1 3 -1.9 a3 1.9 0 0 1 3 1.9 v182.3 z" fill="#7a3ef4"/>
    <path d="M299.5 373.9 v-23.9 a3 1.9 0 0 1 3 -1.9 a3 1.9 0 0 1 3 1.9 v23.9 z" fill="#fd9f14"/>
    <path d="M308.0 373.9 v-92.5 a3 1.9 0 0 1 3 -1.9 a3 1.9 0 0 1 3 1.9 v92.5 z" fill="#54f56a"/>
    <path d="M333.6 373.9 v-209.8 a3 1.9 0 0 1 3 -1.9 a3 1.9 0 0 1 3 1.9 v209.8 z" fill="#7a3ef4"/>
    <path d="M342.1 373.9 v-18.6 a3 1.9 0 0 1 3 -1.9 a3 1.9 0 0 1 3 1.9 v18.6 z" fill="#fd9f14"/>
    <path d="M350.6 373.9 v-87.3 a3 1.9 0 0 1 3 -1.9 a3 1.9 0 0 1 3 1.9 v87.3 z" fill="#54f56a"/>
    <path d="M376.2 373.9 v-118.9 a3 1.9 0 0 1 3 -1.9 a3 1.9 0 0 1 3 1.9 v118.9 z" fill="#7a3ef4"/>
    <path d="M384.7 373.9 v-31.3 a3 1.9 0 0 1 3 -1.9 a3 1.9 0 0 1 3 1.9 v31.3 z" fill="#fd9f14"/>
    <path d="M393.2 373.9 v-76.7 a3 1.9 0 0 1 3 -1.9 a3 1.9 0 0 1 3 1.9 v76.7 z" fill="#54f56a"/>
    <path d="M418.8 373.9 v-208.7 a3 1.9 0 0 1 3 -1.9 a3 1.9 0 0 1 3 1.9 v208.7 z" fill="#7a3ef4"/>
    <path d="M427.3 373.9 v-22.8 a3 1.9 0 0 1 3 -1.9 a3 1.9 0 0 1 3 1.9 v22.8 z" fill="#fd9f14"/>
    <path d="M435.8 373.9 v-97.8 a3 1.9 0 0 1 3 -1.9 a3 1.9 0 0 1 3 1.9 v97.8 z" fill="#54f56a"/>
    <path d="M461.4 373.9 v-208.7 a3 1.9 0 0 1 3 -1.9 a3 1.9 0 0 1 3 1.9 v208.7 z" fill="#7a3ef4"/>
    <path d="M469.9 373.9 v-25.0 a3 1.9 0 0 1 3 -1.9 a3 1.9 0 0 1 3 1.9 v25.0 z" fill="#fd9f14"/>
    <path d="M478.4 373.9 v-108.4 a3 1.9 0 0 1 3 -1.9 a3 1.9 0 0 1 3 1.9 v108.4 z" fill="#54f56a"/>
    <path d="M504.1 373.9 v-198.1 a3 1.9 0 0 1 3 -1.9 a3 1.9 0 0 1 3 1.9 v198.1 z" fill="#7a3ef4"/>
    <path d="M512.6 373.9 v-20.7 a3 1.9 0 0 1 3 -1.9 a3 1.9 0 0 1 3 1.9 v20.7 z" fill="#fd9f14"/>
    <path d="M521.1 373.9 v-118.9 a3 1.9 0 0 1 3 -1.9 a3 1.9 0 0 1 3 1.9 v118.9 z" fill="#54f56a"/>
    <path d="M546.7 373.9 v-166.5 a3 1.9 0 0 1 3 -1.9 a3 1.9 0 0 1 3 1.9 v166.5 z" fill="#7a3ef4"/>
    <path d="M555.2 373.9 v-18.6 a3 1.9 0 0 1 3 -1.9 a3 1.9 0 0 1 3 1.9 v18.6 z" fill="#fd9f14"/>
    <path d="M563.7 373.9 v-87.3 a3 1.9 0 0 1 3 -1.9 a3 1.9 0 0 1 3 1.9 v87.3 z" fill="#54f56a"/>
    <path d="M589.3 373.9 v-113.7 a3 1.9 0 0 1 3 -1.9 a3 1.9 0 0 1 3 1.9 v113.7 z" fill="#7a3ef4"/>
    <path d="M597.8 373.9 v-82.0 a3 1.9 0 0 1 3 -1.9 a3 1.9 0 0 1 3 1.9 v82.0 z" fill="#fd9f14"/>
    <path d="M606.3 373.9 v-76.7 a3 1.9 0 0 1 3 -1.9 a3 1.9 0 0 1 3 1.9 v76.7 z" fill="#54f56a"/>
    </svg>
    <div class="ctitle" style="left:30px;top:16px;letter-spacing:.03px;-webkit-text-stroke:.2px #1f2328">Key Trends (AR Trends &amp; Metrics)</div>
    <div class="abs" style="left:573px;top:16px;width:54px;height:31px;border:1px solid #6f33f5;border-radius:3px;color:#6f33f5;-webkit-text-stroke:.25px #6f33f5;font-size:13.500px;line-height:28px;padding-left:8.500px">Bar<i class="abs" style="left:36px;top:10px;border-left:4px solid transparent;border-right:4px solid transparent;border-top:4.500px solid #6f33f5"></i></div>
    <div class="hline" style="top:63px;width:657px"></div>
  </div>
  <div class="card" id="trendcard" style="left:879px;top:313px;width:461px;height:400px">
    <div class="ctitle" style="left:30px;top:13px;letter-spacing:.15px;-webkit-text-stroke:.2px #1f2328">Trends</div>
    <div class="hline" style="top:56px;width:461px"></div>
    <div class="abs" style="left:24.500px;top:73px;font-size:15.500px;line-height:20px;color:#7031f4;-webkit-text-stroke:.15px #7031f4;letter-spacing:.02px">Key Metrics:</div>
    <div id="tbl">
      <div class="r h" style="top:0px"><span style="left:13px">Description</span><span style="left:116px">July 20</span><span style="left:192px">Aug 20</span><span style="left:265px">Sep 20</span><span style="left:337px">Oct 20</span><span style="left:409px">Nov 20</span></div>
      <div class="r " style="top:49px"><span style="left:13px">Debtors</span><span style="left:116px">99</span><span style="left:192px">108</span><span style="left:265px">113</span><span style="left:337px">95</span><span style="left:409px">102</span></div>
      <div class="r " style="top:96px"><span style="left:13px">Overdues</span><span style="left:116px">16</span><span style="left:192px">17</span><span style="left:265px">15</span><span style="left:337px">14</span><span style="left:409px">18</span></div>
      <div class="r " style="top:143px"><span style="left:13px">Collection</span><span style="left:116px">60</span><span style="left:192px">48</span><span style="left:265px">49</span><span style="left:337px">62</span><span style="left:409px">55</span></div>
    </div>
    <div class="abs" style="left:432px;top:111px;width:5px;height:100px;background:#c3c3c3;border-radius:2.500px"></div>
    <div class="abs" style="left:24px;top:306px;width:356px;height:5px;background:#c3c3c3;border-radius:2.500px"></div>
    <div class="abs" style="left:24.500px;top:332px;font-size:15.500px;line-height:20px;color:#7031f4;-webkit-text-stroke:.15px #7031f4;letter-spacing:.02px">Overdue Ageing:</div>
  </div>
</div>
<div id="vscroll"><i></i></div>
</body>
</html>
